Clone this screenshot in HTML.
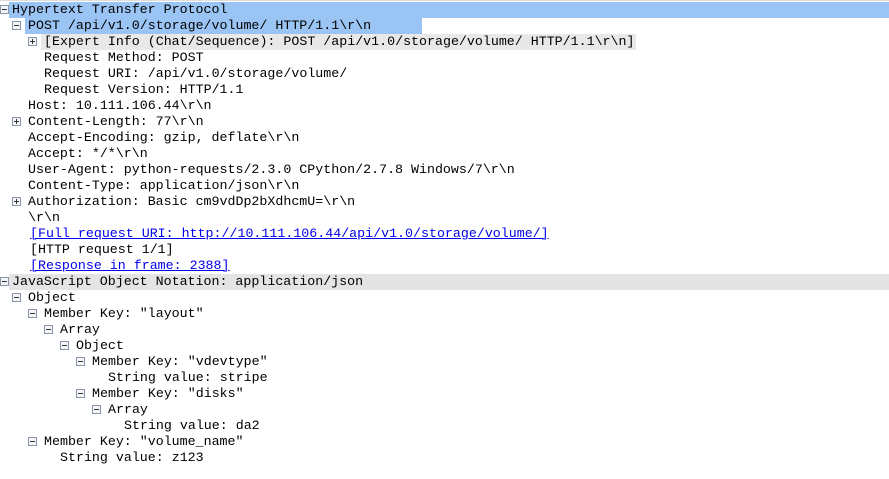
<!DOCTYPE html><html><head><style>
body{margin:0;width:889px;height:479px;background:#fff;overflow:hidden;position:relative;font-family:"Liberation Mono",monospace;font-size:13.3px;color:#000}
.r{position:absolute;height:16px;line-height:16px;white-space:pre}
.i{position:absolute;width:7px;height:7px;border:1px solid #8a96a8;background:#f4f6f9}
.i:before{content:"";position:absolute;left:1px;top:3px;width:5px;height:1px;background:#333}
.p:after{content:"";position:absolute;left:3px;top:1px;width:1px;height:5px;background:#333}
a{color:#0000ee;text-decoration:underline}
</style></head><body>
<div style="position:absolute;left:0;top:0;width:889px;height:1px;background:#ddd"></div>
<div class="r" style="left:9px;top:2px;width:880px;background:#99c4f3"></div>
<div class="r" style="left:25px;top:18px;width:397px;background:#99c4f3"></div>
<div class="r" style="left:41px;top:34px;width:595px;background:#e8e8e8"></div>
<div class="r" style="left:9px;top:274px;width:880px;background:#e4e4e4"></div>

<div class="i" style="left:0;top:5px"></div><div class="r" style="left:12px;top:2px">Hypertext Transfer Protocol</div>
<div class="i" style="left:12px;top:21px"></div><div class="r" style="left:28px;top:18px">POST /api/v1.0/storage/volume/ HTTP/1.1\r\n</div>
<div class="i p" style="left:28px;top:37px"></div><div class="r" style="left:44px;top:34px">[Expert Info (Chat/Sequence): POST /api/v1.0/storage/volume/ HTTP/1.1\r\n]</div>
<div class="r" style="left:44px;top:50px">Request Method: POST</div>
<div class="r" style="left:44px;top:66px">Request URI: /api/v1.0/storage/volume/</div>
<div class="r" style="left:44px;top:82px">Request Version: HTTP/1.1</div>
<div class="r" style="left:28px;top:98px">Host: 10.111.106.44\r\n</div>
<div class="i p" style="left:12px;top:117px"></div><div class="r" style="left:28px;top:114px">Content-Length: 77\r\n</div>
<div class="r" style="left:28px;top:130px">Accept-Encoding: gzip, deflate\r\n</div>
<div class="r" style="left:28px;top:146px">Accept: */*\r\n</div>
<div class="r" style="left:28px;top:162px">User-Agent: python-requests/2.3.0 CPython/2.7.8 Windows/7\r\n</div>
<div class="r" style="left:28px;top:178px">Content-Type: application/json\r\n</div>
<div class="i p" style="left:12px;top:197px"></div><div class="r" style="left:28px;top:194px">Authorization: Basic cm9vdDp2bXdhcmU=\r\n</div>
<div class="r" style="left:28px;top:210px">\r\n</div>
<div class="r" style="left:30px;top:226px"><a>[Full request URI: http://10.111.106.44/api/v1.0/storage/volume/]</a></div>
<div class="r" style="left:30px;top:242px">[HTTP request 1/1]</div>
<div class="r" style="left:30px;top:258px"><a>[Response in frame: 2388]</a></div>
<div class="i" style="left:0;top:277px"></div><div class="r" style="left:12px;top:274px">JavaScript Object Notation: application/json</div>
<div class="i" style="left:12px;top:293px"></div><div class="r" style="left:28px;top:290px">Object</div>
<div class="i" style="left:28px;top:309px"></div><div class="r" style="left:44px;top:306px">Member Key: "layout"</div>
<div class="i" style="left:44px;top:325px"></div><div class="r" style="left:60px;top:322px">Array</div>
<div class="i" style="left:60px;top:341px"></div><div class="r" style="left:76px;top:338px">Object</div>
<div class="i" style="left:76px;top:357px"></div><div class="r" style="left:92px;top:354px">Member Key: "vdevtype"</div>
<div class="r" style="left:108px;top:370px">String value: stripe</div>
<div class="i" style="left:76px;top:389px"></div><div class="r" style="left:92px;top:386px">Member Key: "disks"</div>
<div class="i" style="left:92px;top:405px"></div><div class="r" style="left:108px;top:402px">Array</div>
<div class="r" style="left:124px;top:418px">String value: da2</div>
<div class="i" style="left:28px;top:437px"></div><div class="r" style="left:44px;top:434px">Member Key: "volume_name"</div>
<div class="r" style="left:60px;top:450px">String value: z123</div>
</body></html>
